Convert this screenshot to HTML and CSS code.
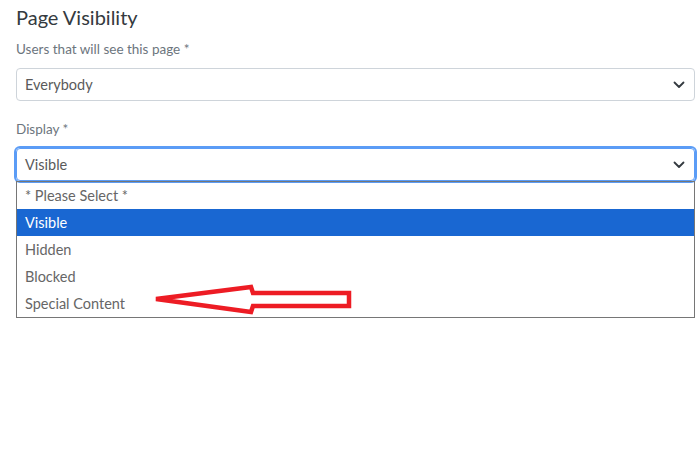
FILE: index.html
```html
<!DOCTYPE html>
<html>
<head>
<meta charset="utf-8">
<link rel="stylesheet" href="styles.css">
</head>
<body>
<div class="page">
  <h1 class="title">Page Visibility</h1>
  <div class="field">
    <div class="label">Users that will see this page *</div>
    <div class="select">
      <span>Everybody</span>
      <svg class="chev" width="12" height="8" viewBox="0 0 12 8"><path d="M1.5 1.5 L6 6 L10.5 1.5" fill="none" stroke="#343a40" stroke-width="1.8" stroke-linecap="round" stroke-linejoin="round"/></svg>
    </div>
  </div>
  <div class="field field2">
    <div class="label">Display *</div>
    <div class="select focused">
      <span>Visible</span>
      <svg class="chev" width="12" height="8" viewBox="0 0 12 8"><path d="M1.5 1.5 L6 6 L10.5 1.5" fill="none" stroke="#343a40" stroke-width="1.8" stroke-linecap="round" stroke-linejoin="round"/></svg>
    </div>
    <div class="list">
      <div class="opt">* Please Select *</div>
      <div class="opt sel">Visible</div>
      <div class="opt">Hidden</div>
      <div class="opt">Blocked</div>
      <div class="opt">Special Content</div>
    </div>
  </div>
</div>
<svg class="arrow" width="698" height="452" viewBox="0 0 698 452">
  <polygon points="156,299 251,287 253,293 349,293 349,306 253,306 251,312" fill="none" stroke="#ed1c24" stroke-width="4.5" stroke-linejoin="miter"/>
</svg>
</body>
</html>
```
FILE: styles.css
```css
html, body { margin: 0; padding: 0; background: #fff; }
body { font-family: "Lato", "Noto Sans", sans-serif; width: 698px; height: 452px; position: relative; overflow: hidden; }
.page { padding: 5px 3px 0 16px; }
.title { font-size: 20px; font-weight: 400; color: #343a40; margin: 0; line-height: 24px; }
.field { margin-top: 11px; }
.field2 { margin-top: 19px; }
.label { font-size: 13.5px; color: #6c757d; line-height: 18px; }
.select {
  margin-top: 10px;
  height: 31px;
  border: 1px solid #ced4da;
  border-radius: 4px;
  display: flex;
  align-items: center;
  justify-content: space-between;
  padding: 0 9px 0 8px;
  font-size: 14.5px;
  color: #5a5a5a;
}
.chev { margin-top: 1px; }
.select.focused {
  border-color: #5b9cf6;
  box-shadow: 0 0 0 2px #5b9cf6;
  border-radius: 4px;
}
.list {
  border: 1px solid #767676;
  margin-top: 0;
}
.opt {
  height: 27px;
  line-height: 27px;
  padding-left: 8px;
  font-size: 14.5px;
  color: #666;
}
.opt.sel { background: #1967d2; color: #fff; }
.arrow { position: absolute; left: 0; top: 0; pointer-events: none; }
```
